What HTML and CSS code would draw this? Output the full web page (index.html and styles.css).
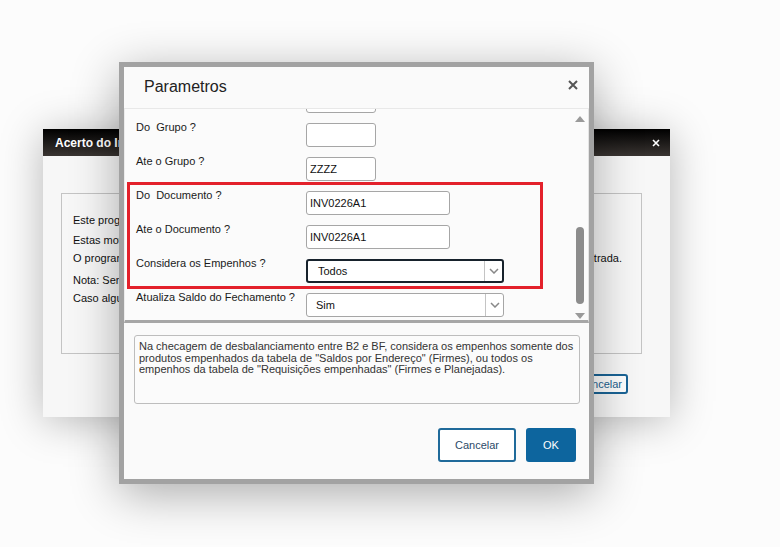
FILE: index.html
```html
<!DOCTYPE html>
<html lang="pt">
<head>
<meta charset="utf-8">
<title>Parametros</title>
<link rel="stylesheet" href="styles.css">
</head>
<body>
<div class="desk">
  <div class="win">
    <div class="win-head">
      <span class="win-title">Acerto do Inventário</span>
      <svg class="win-close" width="8" height="8" viewBox="0 0 8 8"><path d="M1 1L7 7M7 1L1 7" stroke="#fff" stroke-width="1.6"/></svg>
    </div>
    <div class="win-body">
      <div class="win-box">
        <p class="wl l1">Este programa tem como objetivo acertar os saldos do inventário.</p>
        <p class="wl l2">Estas movimentações serão geradas com base nos parâmetros.</p>
        <p class="wl l3 split"><span>O programa irá analisar as divergências entre os saldos</span><span>e os documentos de entrada.</span></p>
        <p class="wl l4">Nota: Será considerado o saldo do último fechamento.</p>
        <p class="wl l5">Caso algum produto apresente divergência, verifique o log.</p>
      </div>
      <div class="win-actions">
        <button class="win-btn">Cancelar</button>
      </div>
    </div>
  </div>

  <div class="dlg">
    <div class="dlg-head">
      <span class="dlg-title">Parametros</span>
      <svg class="dlg-close" width="10" height="10" viewBox="0 0 10 10"><path d="M1 1L9 9M9 1L1 9" stroke="#555" stroke-width="2"/></svg>
    </div>
    <div class="scroll">
      <div class="fields">
        <div class="fields-inner">
          <div class="row"><span class="lbl"></span><span class="inp w70"></span></div>
          <div class="row"><span class="lbl">Do&nbsp; Grupo ?</span><span class="inp w70"></span></div>
          <div class="row"><span class="lbl">Ate o Grupo ?</span><span class="inp w70">ZZZZ</span></div>
          <div class="row"><span class="lbl">Do&nbsp; Documento ?</span><span class="inp w144">INV0226A1</span></div>
          <div class="row"><span class="lbl">Ate o Documento ?</span><span class="inp w144">INV0226A1</span></div>
          <div class="row"><span class="lbl">Considera os Empenhos ?</span>
            <span class="sel active"><span class="sel-val">Todos</span><span class="sel-arrow"><svg width="10" height="6" viewBox="0 0 10 6"><path d="M1 1L5 5L9 1" fill="none" stroke="#888" stroke-width="1.5"/></svg></span></span>
          </div>
          <div class="row"><span class="lbl">Atualiza Saldo do Fechamento ?</span>
            <span class="sel"><span class="sel-val">Sim</span><span class="sel-arrow"><svg width="10" height="6" viewBox="0 0 10 6"><path d="M1 1L5 5L9 1" fill="none" stroke="#888" stroke-width="1.5"/></svg></span></span>
          </div>
        </div>
        <div class="mark"></div>
      </div>
      <div class="sbar">
        <span class="arr-up"></span>
        <span class="track"><span class="thumb"></span></span>
        <span class="arr-down"></span>
      </div>
    </div>
    <div class="desc">Na checagem de desbalanciamento entre B2 e BF, considera os empenhos somente dos<br>produtos empenhados da tabela de "Saldos por Endereço" (Firmes), ou todos os<br>empenhos da tabela de "Requisições empenhadas" (Firmes e Planejadas).</div>
    <div class="actions">
      <button class="btn btn-out">Cancelar</button>
      <button class="btn btn-ok">OK</button>
    </div>
  </div>
</div>
</body>
</html>
```

FILE: styles.css
```css
* { box-sizing: border-box; }
html, body { margin: 0; padding: 0; }
body {
  width: 780px;
  height: 547px;
  overflow: hidden;
  background: #fcfcfc;
  font-family: "Liberation Sans", Arial, sans-serif;
  font-size: 11px;
  color: #222;
}
.desk { position: relative; width: 780px; height: 547px; }

/* background window */
.win {
  position: absolute;
  left: 43px;
  top: 129px;
  width: 627px;
  height: 288px;
  background: #f7f7f7;
  box-shadow: 0 4px 40px rgba(0,0,0,0.28);
  display: flex;
  flex-direction: column;
}
.win-head {
  height: 27px;
  background: linear-gradient(#000, #3a3532);
  display: flex;
  align-items: center;
  justify-content: space-between;
  padding: 0 10px 0 12px;
}
.win-title { color: #fff; font-weight: bold; font-size: 12px; }
.win-body { padding: 37px 28px 0 18px; }
.win-box {
  height: 161px;
  border: 1px solid #c4c4c4;
  padding: 19px 0 0 11px;
}
.wl { margin: 0; line-height: 14px; color: #111; white-space: nowrap; }
.l2 { margin-top: 6px; }
.l3 { margin-top: 4px; }
.l4 { margin-top: 8px; }
.l5 { margin-top: 4px; }
.split { width: 549px; display: flex; justify-content: space-between; }
.win-actions { display: flex; justify-content: flex-end; padding: 20px 14px 0 0; }
.win-btn {
  height: 20px;
  width: 70px;
  border: 2px solid #1a6496;
  border-radius: 3px;
  background: #fff;
  color: #1d5f8f;
  font-family: inherit;
  font-size: 11px;
  padding: 0 4px 0 0;
  text-align: right;
}

/* dialog */
.dlg {
  position: absolute;
  left: 119px;
  top: 62px;
  width: 475px;
  height: 422px;
  border: 5px solid #a2a2a2;
  background: #fafafa;
  box-shadow: 0 10px 45px rgba(0,0,0,0.32);
  display: flex;
  flex-direction: column;
}
.dlg-head {
  height: 42px;
  border-bottom: 1px solid #e8e8e8;
  display: flex;
  align-items: center;
  justify-content: space-between;
  padding: 0 11px 2px 20px;
}
.dlg-title { font-size: 16px; color: #222; }
.dlg-close { margin-top: -3px; }

.scroll {
  height: 214px;
  display: flex;
  border-bottom: 3px solid #a6a6a6;
  border-left: 1px solid #ececec;
  border-right: 1px solid #e4e4e4;
  background: #fbfbfb;
}
.fields { flex: 1; overflow: hidden; position: relative; padding-left: 11px; }
.fields-inner { margin-top: -23px; }
.row { height: 34px; display: flex; align-items: flex-start; }
.lbl { width: 170px; line-height: 14px; color: #1a1a1a; white-space: nowrap; }
.inp {
  margin-top: 3px;
  height: 24px;
  border: 1px solid #a6a6a6;
  border-radius: 3px;
  background: #fff;
  padding-left: 3px;
  line-height: 22px;
  color: #111;
}
.w70 { width: 70px; }
.w144 { width: 144px; }
.sel {
  margin-top: 3px;
  width: 198px;
  height: 24px;
  border: 1px solid #a6a6a6;
  border-radius: 3px;
  background: #fff;
  display: flex;
  align-items: stretch;
}
.sel.active { border: 2px solid #17222c; }
.sel-val { flex: 1; padding-left: 9px; line-height: 22px; color: #111; }
.sel.active .sel-val { padding-left: 10px; line-height: 20px; }
.sel-arrow {
  width: 18px;
  border-left: 1px solid #c4c4c4;
  display: flex;
  align-items: center;
  justify-content: center;
}
.mark {
  position: absolute;
  left: 2px;
  top: 73px;
  width: 416px;
  height: 107px;
  border: 3px solid #e3212b;
}
.sbar {
  width: 16px;
  display: flex;
  flex-direction: column;
  align-items: center;
  padding: 7px 0 1px;
}
.arr-up {
  width: 0; height: 0;
  border-left: 5px solid transparent;
  border-right: 5px solid transparent;
  border-bottom: 6px solid #9a9a9a;
}
.arr-down {
  width: 0; height: 0;
  border-left: 5px solid transparent;
  border-right: 5px solid transparent;
  border-top: 6px solid #9a9a9a;
}
.track {
  flex: 1;
  display: flex;
  flex-direction: column;
  justify-content: flex-end;
  padding-bottom: 9px;
}
.thumb { width: 8px; height: 77px; border-radius: 4px; background: #8c8c8c; }

.desc {
  margin: 12px 9px 0 10px;
  height: 69px;
  border: 1px solid #bdbdbd;
  border-radius: 3px;
  background: #fbfbfb;
  padding: 5px 4px;
  line-height: 11.5px;
  color: #333;
  white-space: nowrap;
}
.actions {
  display: flex;
  justify-content: flex-end;
  gap: 10px;
  margin-top: 24px;
  padding-right: 13px;
}
.btn {
  height: 34px;
  border-radius: 3px;
  font-family: inherit;
  font-size: 11px;
  cursor: pointer;
}
.btn-out { width: 78px; background: #fff; border: 2px solid #1f6a9a; color: #2c4a68; }
.btn-ok { width: 50px; background: #0d659e; border: none; color: #fff; }
```
